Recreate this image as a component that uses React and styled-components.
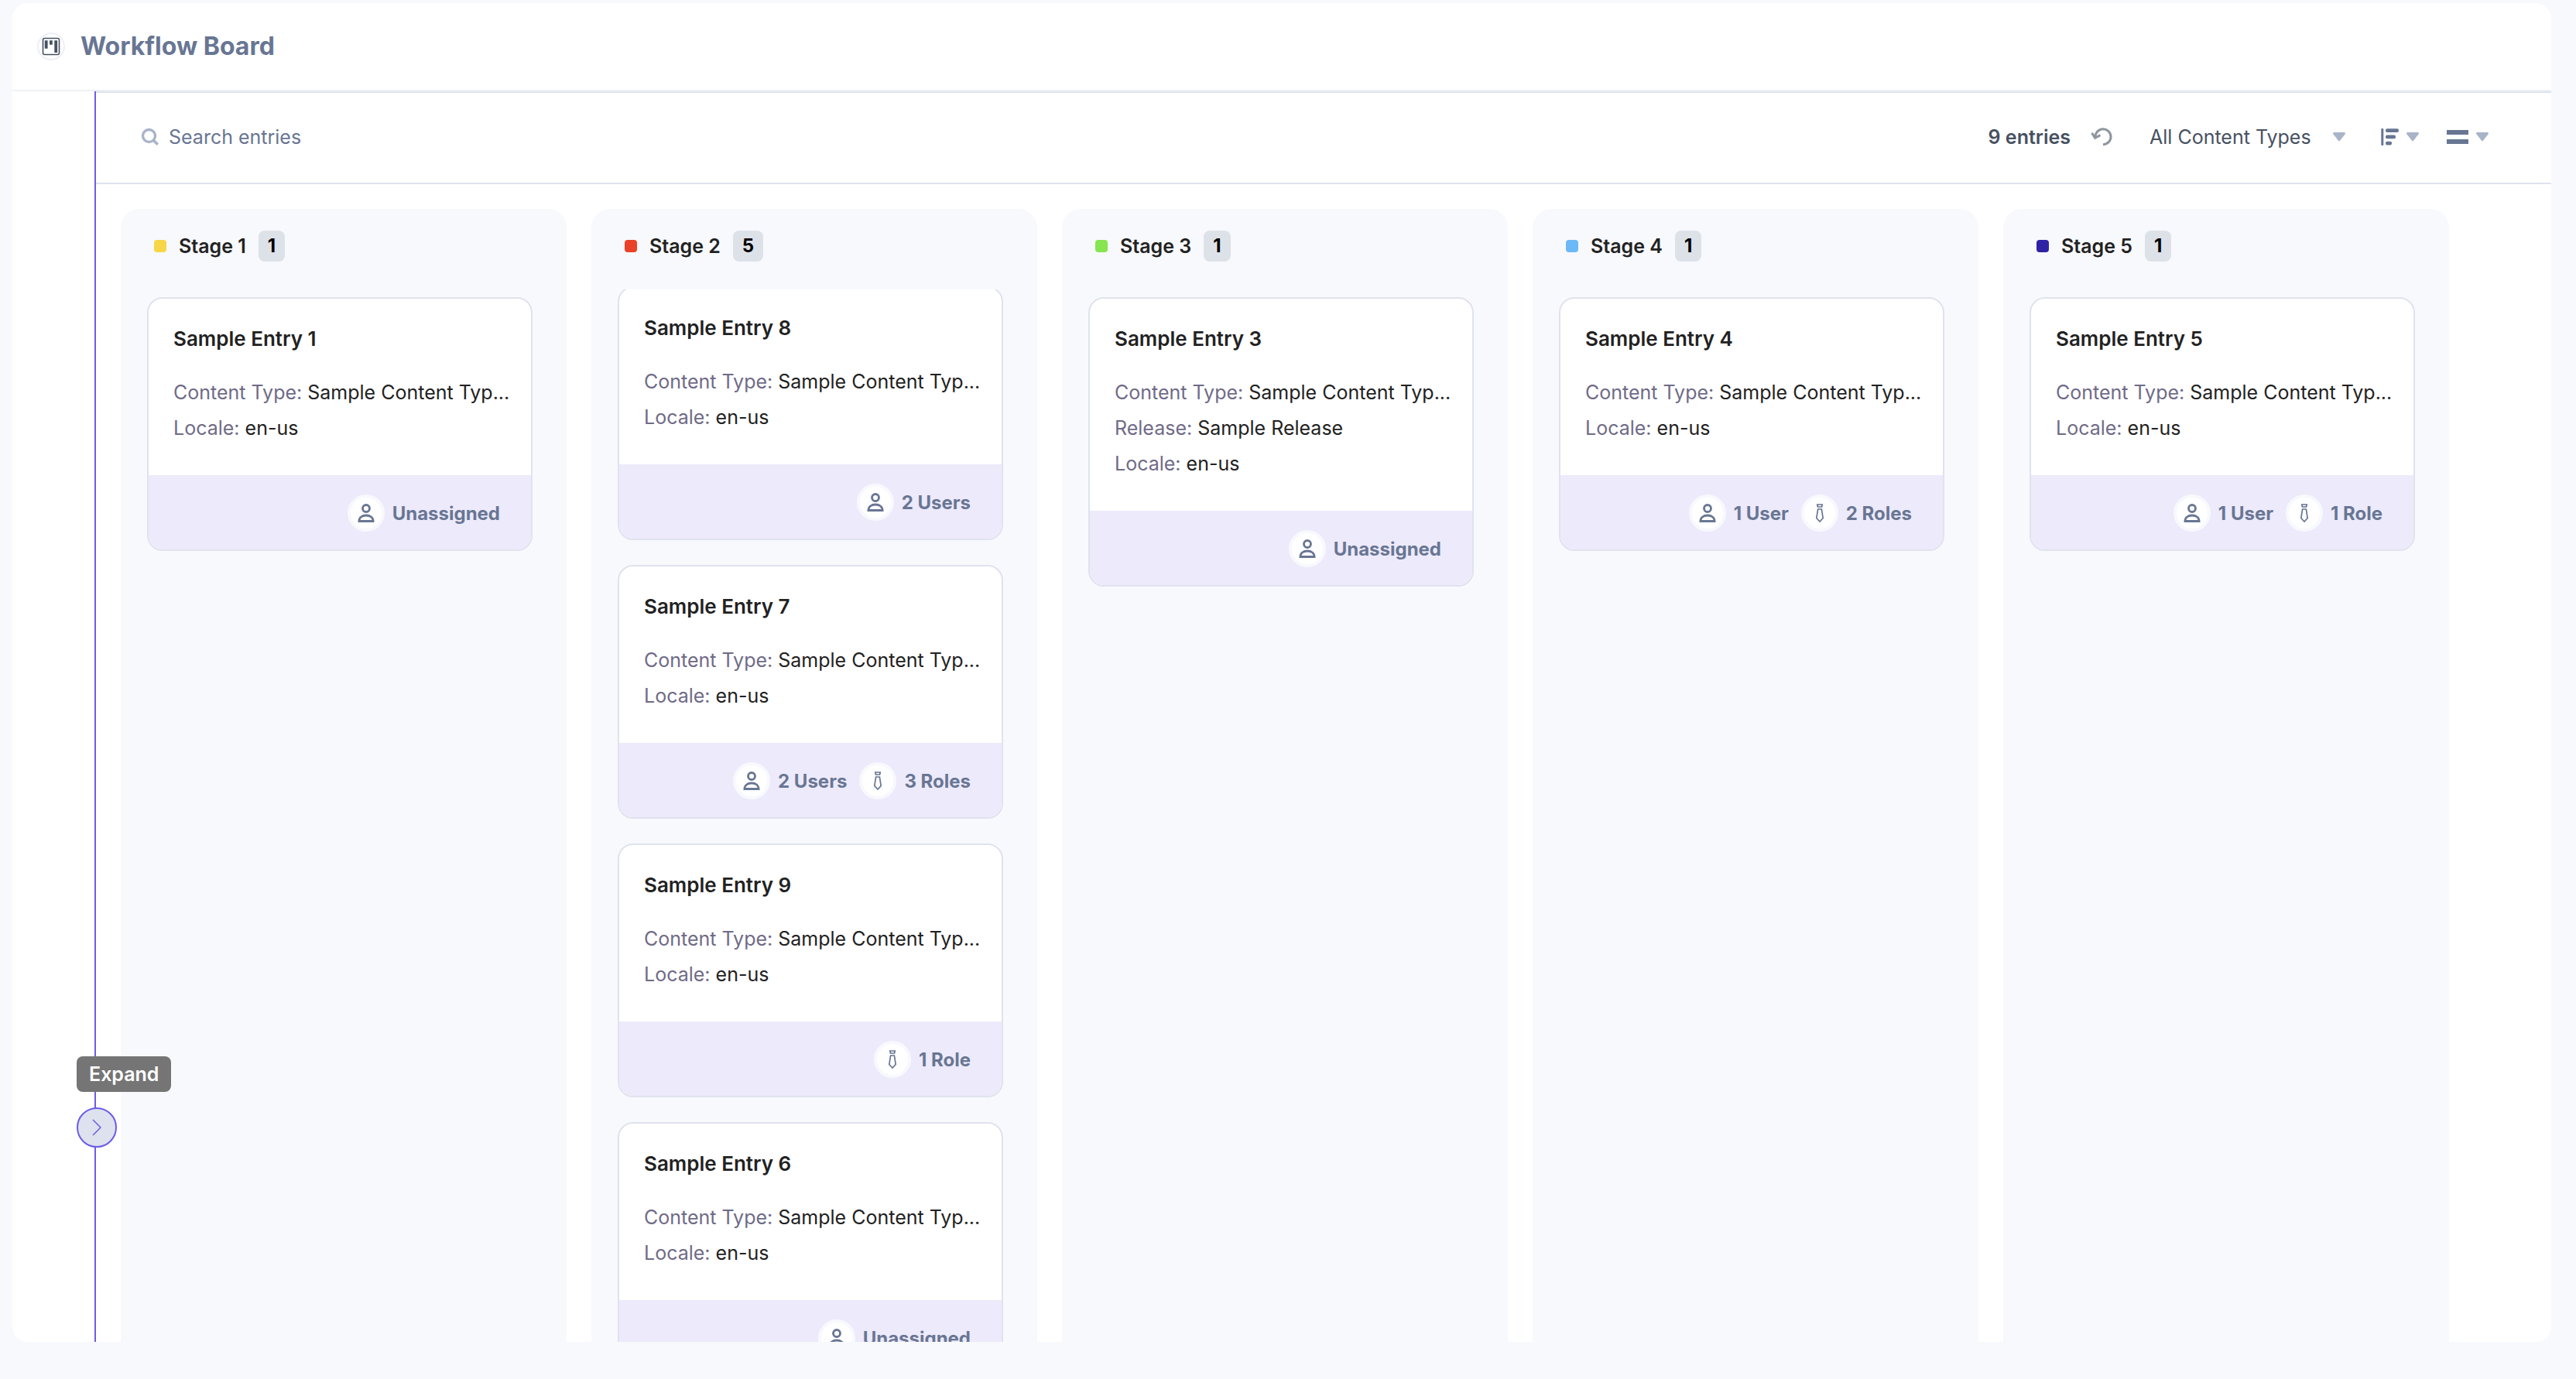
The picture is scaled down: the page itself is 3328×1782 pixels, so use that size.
import React, { useLayoutEffect, useRef, useState } from "react";
import styled, { createGlobalStyle } from "styled-components";

const stages = [
  {
    name: "Stage 1",
    color: "#f7d648",
    count: 1,
    entries: [{ title: "Sample Entry 1" }],
  },
  {
    name: "Stage 2",
    color: "#ea4228",
    count: 5,
    scrollTop: 14,
    entries: [
      { title: "Sample Entry 8", users: "2 Users" },
      { title: "Sample Entry 7", users: "2 Users", roles: "3 Roles" },
      { title: "Sample Entry 9", roles: "1 Role" },
      { title: "Sample Entry 6" },
    ],
  },
  {
    name: "Stage 3",
    color: "#86e551",
    count: 1,
    entries: [{ title: "Sample Entry 3", release: "Sample Release" }],
  },
  {
    name: "Stage 4",
    color: "#6cb9f7",
    count: 1,
    entries: [{ title: "Sample Entry 4", users: "1 User", roles: "2 Roles" }],
  },
  {
    name: "Stage 5",
    color: "#2f22a5",
    count: 1,
    entries: [{ title: "Sample Entry 5", users: "1 User", roles: "1 Role" }],
  },
];

const BoardIcon = () => (
  <svg width="36" height="36" viewBox="0 0 36 36" fill="none">
    <circle cx="18" cy="18" r="17" stroke="#edeff7" strokeWidth="2" />
    <rect x="7.5" y="7.5" width="21" height="21" rx="2" stroke="#475161" strokeWidth="1.6" />
    <path d="M11.7 10.3v10.4M17.9 10.3v5.4M24.2 10.3V26" stroke="#475161" strokeWidth="3.8" />
  </svg>
);

const SearchIcon = () => (
  <svg width="24" height="24" viewBox="0 0 24 24" fill="none" stroke="#a9b4c9">
    <circle cx="10.5" cy="10.5" r="8" strokeWidth="3.4" />
    <path d="M16.2 16.2l5.6 5.6" strokeWidth="3.6" />
  </svg>
);

const ResetIcon = () => (
  <svg width="28" height="24" viewBox="0 0 28 24" fill="none" stroke="#8f959e" strokeWidth="3">
    <path d="M6.1 12.8A10 10 0 1 1 16 21.7" />
    <path d="M1.5 6.8l4.1 6.5 6.9-3.6" />
  </svg>
);

const CaretIcon = () => (
  <svg width="16" height="12" viewBox="0 0 16 12" fill="#a9b4c9">
    <path d="M1.5 0h13c1.4 0 1.9 1.5 1 2.5L9 10.8c-.6.7-1.400.7-2 0L.5 2.500C-.4 1.500.1 0 1.500 0z" />
  </svg>
);

const SortIcon = () => (
  <svg width="23" height="22" viewBox="0 0 23 22" fill="#687693">
    <rect x="0.3" y="0" width="3" height="22" rx="1" />
    <rect x="6" y="0.3" width="17" height="4.7" rx="2" />
    <rect x="6" y="8.6" width="13" height="4.6" rx="2" />
    <rect x="6" y="16.8" width="8" height="4.7" rx="2" />
  </svg>
);

const RowsIcon = () => (
  <svg width="28" height="20" viewBox="0 0 28 20" fill="#687693">
    <rect x="0" y="1" width="28" height="6" />
    <rect x="0" y="13" width="28" height="6" />
  </svg>
);

const UserIcon = () => (
  <svg width="24" height="24" viewBox="0 0 24 24" fill="none" stroke="#687693" strokeWidth="2.8">
    <circle cx="12" cy="6" r="4.5" />
    <path d="M2.9 22.5c0-4.6 3.8-7.5 9.1-7.500s9.100 2.900 9.100 7.500z" />
  </svg>
);

const TieIcon = () => (
  <svg width="24" height="24" viewBox="0 0 24 24" fill="none" stroke="#687693" strokeWidth="1.7">
    <path d="M8.8 1h6.400l-.6 3h-5.200z" />
    <path d="M9.600 7h4.800l1.800 11.500L12 23l-4.200-4.500z" />
  </svg>
);

const ChevronIcon = () => (
  <svg width="12" height="22" viewBox="0 0 12 22" fill="none" stroke="#6c5ce7" strokeWidth="1.5">
    <path d="M1 1l10 10L1 21" />
  </svg>
);

const EntryCard = ({ entry }) => (
  <Card>
    <CardBody>
      <CardTitle>{entry.title}</CardTitle>
      <Field>
        <FieldName>Content Type:</FieldName> Sample Content Typ...
      </Field>
      {entry.release && (
        <Field>
          <FieldName>Release:</FieldName> {entry.release}
        </Field>
      )}
      <Field>
        <FieldName>Locale:</FieldName> en-us
      </Field>
    </CardBody>
    <CardFooter>
      {(entry.users || !entry.roles) && (
        <Assignee>
          <Avatar>
            <UserIcon />
          </Avatar>
          {entry.users || "Unassigned"}
        </Assignee>
      )}
      {entry.roles && (
        <Assignee>
          <Avatar>
            <TieIcon />
          </Avatar>
          {entry.roles}
        </Assignee>
      )}
    </CardFooter>
  </Card>
);

const StageColumn = ({ stage }) => {
  const listRef = useRef(null);

  useLayoutEffect(() => {
    listRef.current.scrollTop = stage.scrollTop || 0;
  }, [stage.scrollTop]);

  return (
    <Column>
      <ColumnHeader>
        <Swatch $color={stage.color} />
        <StageName>{stage.name}</StageName>
        <Count>{stage.count}</Count>
      </ColumnHeader>
      <CardList ref={listRef}>
        {stage.entries.map((entry) => (
          <EntryCard key={entry.title} entry={entry} />
        ))}
      </CardList>
    </Column>
  );
};

const App = () => {
  const [search, setSearch] = useState("");

  return (
    <>
      <GlobalStyle />
      <Page>
        <Panel>
          <Header>
            <BoardIcon />
            <Title>Workflow Board</Title>
          </Header>
          <Content>
            <Rail>
              <Expander>
                <Tooltip>Expand</Tooltip>
                <ExpandButton type="button" aria-label="Expand">
                  <ChevronIcon />
                </ExpandButton>
              </Expander>
            </Rail>
            <Main>
              <Toolbar>
                <SearchLabel>
                  <SearchIcon />
                  <SearchInput
                    type="text"
                    aria-label="Search entries"
                    placeholder="Search entries"
                    value={search}
                    onChange={(e) => setSearch(e.target.value)}
                  />
                </SearchLabel>
                <EntryCount>9 entries</EntryCount>
                <ResetButton type="button" aria-label="Reset">
                  <ResetIcon />
                </ResetButton>
                <SelectWrapper>
                  <TypeSelect aria-label="Content type" defaultValue="all">
                    <option value="all">All Content Types</option>
                  </TypeSelect>
                  <CaretIcon />
                </SelectWrapper>
                <MenuButton type="button" aria-label="Sort">
                  <SortIcon />
                  <CaretIcon />
                </MenuButton>
                <MenuButton type="button" aria-label="View">
                  <RowsIcon />
                  <CaretIcon />
                </MenuButton>
              </Toolbar>
              <Board>
                {stages.map((stage) => (
                  <StageColumn key={stage.name} stage={stage} />
                ))}
              </Board>
            </Main>
          </Content>
        </Panel>
      </Page>
    </>
  );
};

export default App;

const GlobalStyle = createGlobalStyle`
  * {
    box-sizing: border-box;
  }
  body {
    margin: 0;
    background: #f8f9fd;
    font-family: Inter, "Liberation Sans", sans-serif;
    font-size: 25px;
    color: #222222;
  }
  svg {
    display: block;
    flex: none;
  }
  button, input, select {
    font: inherit;
    color: inherit;
    padding: 0;
    border: none;
    background: none;
  }
`;

const Page = styled.div`
  height: 100vh;
  padding: 4px 32px 48px 16px;
`;

const Panel = styled.div`
  display: flex;
  flex-direction: column;
  height: 100%;
  background: #ffffff;
  border-radius: 20px;
  overflow: hidden;
`;

const Header = styled.header`
  display: flex;
  align-items: center;
  gap: 20px;
  flex: none;
  height: 114px;
  padding: 0 32px;
  border-bottom: 2px solid #edf1f7;
`;

const Title = styled.h1`
  margin: 0;
  font-size: 32px;
  line-height: 40px;
  font-weight: 700;
  color: #687693;
`;

const Content = styled.div`
  display: flex;
  flex: 1;
  min-height: 0;
`;

const Rail = styled.aside`
  position: relative;
  flex: none;
  width: 108px;
  border-right: 2px solid #6c5ce7;
`;

/* sits over the rail line */
const Expander = styled.div`
  position: absolute;
  z-index: 1;
  left: 83px;
  bottom: 251px;
  display: flex;
  flex-direction: column;
  align-items: flex-start;
  gap: 20px;
`;

const Tooltip = styled.span`
  padding: 0 16px;
  line-height: 46px;
  font-weight: 600;
  color: #ffffff;
  background: #757575;
  border-radius: 8px;
`;

const ExpandButton = styled.button`
  display: flex;
  align-items: center;
  justify-content: center;
  width: 52px;
  height: 52px;
  border: 2px solid #6c5ce7;
  border-radius: 50%;
  background: #dde2ee;
  cursor: pointer;
`;

const Main = styled.main`
  display: flex;
  flex-direction: column;
  flex: 1;
  min-width: 0;
`;

const Toolbar = styled.div`
  display: flex;
  align-items: center;
  flex: none;
  height: 120px;
  padding: 0 81px 2px 58px;
  border-top: 2px solid #dde3ee;
  border-bottom: 2px solid #dde3ee;
`;

const SearchLabel = styled.label`
  display: flex;
  align-items: center;
  gap: 12px;
  flex: 1;
`;

const SearchInput = styled.input`
  flex: 1;
  line-height: 40px;
  outline: none;
  &::placeholder {
    color: #687693;
    opacity: 1;
  }
`;

const EntryCount = styled.span`
  font-weight: 600;
  color: #475161;
`;

const ResetButton = styled.button`
  margin: 0 48px 0 26px;
  cursor: pointer;
`;

const SelectWrapper = styled.div`
  display: flex;
  align-items: center;
  gap: 28px;
  margin-right: 46px;
`;

const TypeSelect = styled.select`
  appearance: none;
  color: #475161;
  cursor: pointer;
`;

const MenuButton = styled.button`
  display: flex;
  align-items: center;
  gap: 10px;
  cursor: pointer;
  & + & {
    margin-left: 36px;
  }
`;

const Board = styled.div`
  display: grid;
  grid-template-columns: repeat(5, minmax(0, 1fr));
  gap: 32px;
  flex: 1;
  min-height: 0;
  padding: 32px 132px 0 32px;
`;

const Column = styled.section`
  display: flex;
  flex-direction: column;
  min-height: 0;
  background: #f8f9fd;
  border-radius: 24px 24px 0 0;
`;

const ColumnHeader = styled.div`
  display: flex;
  align-items: center;
  gap: 16px;
  flex: none;
  height: 104px;
  padding: 0 43px 8px;
`;

const Swatch = styled.span`
  width: 16px;
  height: 16px;
  border-radius: 4px;
  background: ${(props) => props.$color};
`;

const StageName = styled.h2`
  margin: 0;
  font-size: 25px;
  line-height: 40px;
  font-weight: 600;
`;

const Count = styled.span`
  padding: 0 12px;
  font-size: 24px;
  line-height: 40px;
  font-weight: 700;
  color: #000000;
  background: #dde2e9;
  border-radius: 8px;
`;

const CardList = styled.div`
  display: flex;
  flex-direction: column;
  gap: 32px;
  flex: 1;
  min-height: 0;
  padding: 10px 44px 32px 34px;
  overflow-y: auto;
  scrollbar-width: none;
`;

const Card = styled.article`
  flex: none;
  border: 2px solid #dfe3ee;
  border-radius: 20px;
  background: #ffffff;
  overflow: hidden;
`;

const CardBody = styled.div`
  padding: 36px 24px 38px 32px;
`;

const CardTitle = styled.h3`
  margin: 0 0 30px;
  font-size: 26px;
  line-height: 32px;
  font-weight: 600;
`;

const Field = styled.p`
  margin: 0;
  line-height: 46px;
  white-space: nowrap;
`;

const FieldName = styled.span`
  color: #6f6b87;
`;

const CardFooter = styled.div`
  display: flex;
  align-items: center;
  justify-content: flex-end;
  gap: 16px;
  height: 96px;
  padding: 2px 40px 0;
  background: #edeafb;
`;

const Assignee = styled.span`
  display: flex;
  align-items: center;
  gap: 10px;
  font-size: 24px;
  font-weight: 700;
  color: #687693;
`;

const Avatar = styled.span`
  display: flex;
  align-items: center;
  justify-content: center;
  width: 48px;
  height: 48px;
  border: 4px solid #f8f9fd;
  border-radius: 50%;
  background: #ffffff;
`;
